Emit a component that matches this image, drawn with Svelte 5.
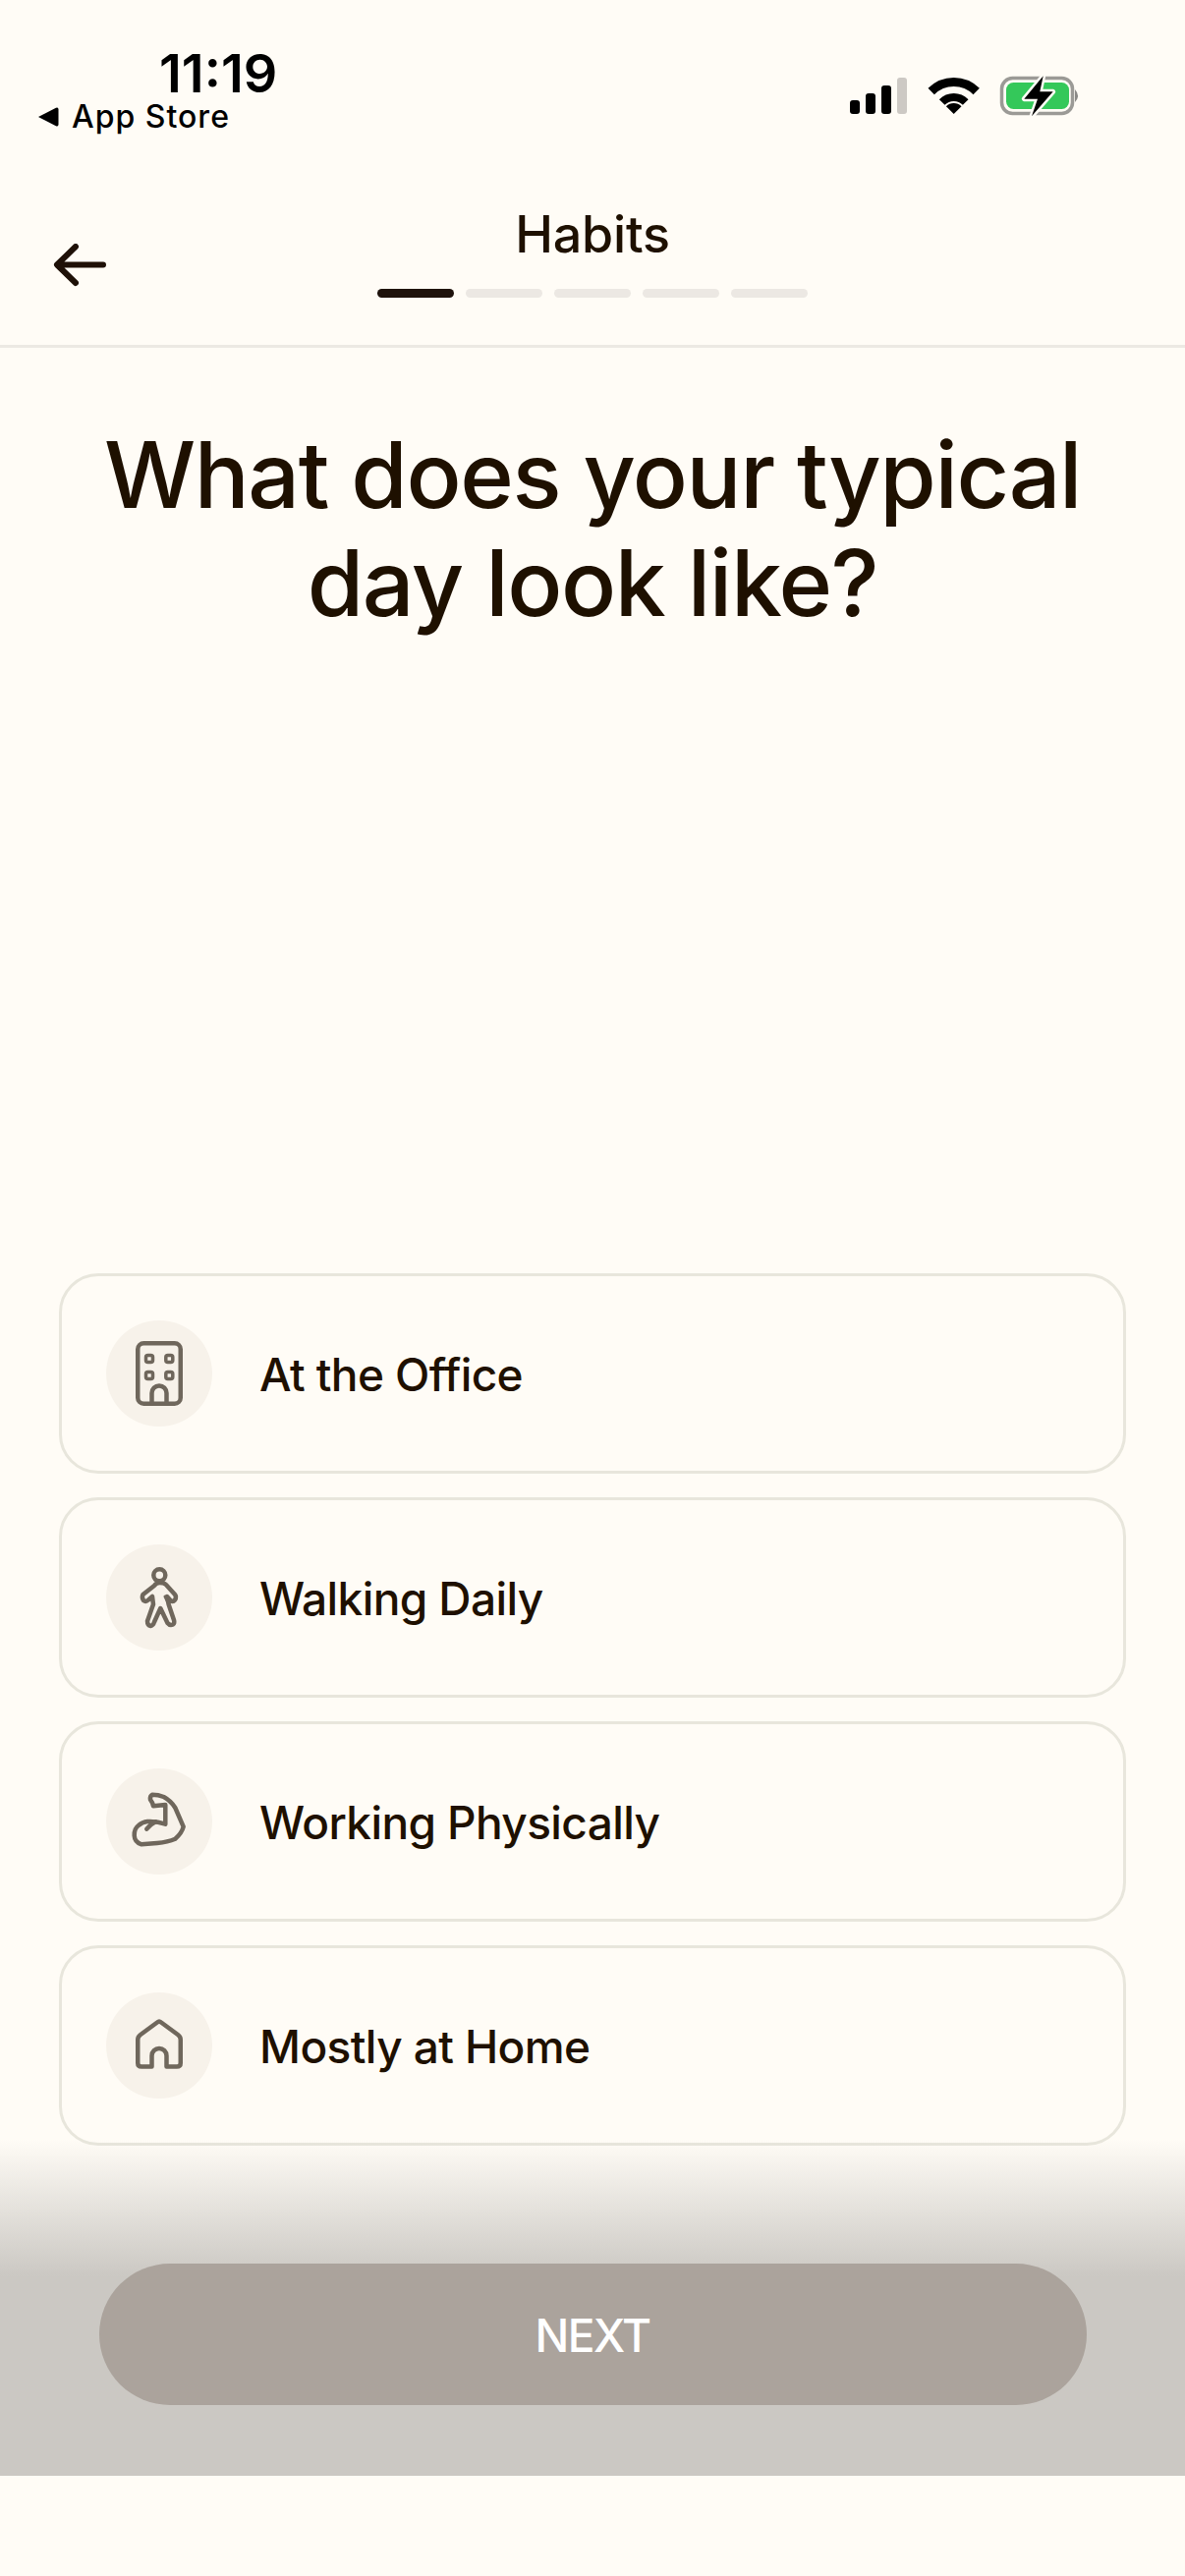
<script>
  const steps = [true, false, false, false, false];
  const options = ['At the Office', 'Walking Daily', 'Working Physically', 'Mostly at Home'];
</script>

<main class="page">
  <div class="status">
    <div class="status-left">
      <span class="time">11:19</span>
      <span class="back-app">
        <svg class="tri" viewBox="0 0 22 20" aria-hidden="true"><path d="M1 10 L19 0.8 Q21.5 0 21.5 2.5 V17.5 Q21.5 20 19 19.2 Z" fill="#000"/></svg>
        App Store
      </span>
    </div>
    <svg class="status-icons" viewBox="0 0 236 40" aria-hidden="true">
      <rect x="0" y="23" width="10" height="14" rx="3" fill="#000"/>
      <rect x="16" y="16" width="10" height="21" rx="3" fill="#000"/>
      <rect x="32" y="8" width="10" height="29" rx="3" fill="#000"/>
      <rect x="48" y="0" width="10" height="37" rx="3" fill="#cdc9c4"/>
      <g fill="none" stroke="#000">
        <path d="M82.7 14 A32.5 32.5 0 0 1 128.7 14" stroke-width="9"/>
        <path d="M93.7 25 A17 17 0 0 1 117.7 25" stroke-width="8"/>
      </g>
      <path d="M105.7 37 L97.9 29.2 A11 11 0 0 1 113.5 29.2 Z" fill="#000"/>
      <rect x="154.5" y="0.5" width="72" height="36" rx="11" fill="none" stroke="#9b9a96" stroke-width="3.5"/>
      <rect x="159" y="5" width="64" height="27" rx="7.5" fill="#34c85a"/>
      <path d="M229 12 Q235 18.5 229 25 Z" fill="#8a8986"/>
      <path d="M196.7 -1.7 L177.3 21.7 H191 L185 39.3 L206.7 14.3 H193.3 Z" fill="#000" stroke="#fffcf6" stroke-width="5" paint-order="stroke" stroke-linejoin="round"/>
    </svg>
  </div>

  <header class="topbar">
    <button class="back" aria-label="Back">
      <svg viewBox="0 0 54 44" aria-hidden="true"><path d="M51 21.5 H5 M23 3 L4 21.5 L23 40" fill="none" stroke="#1e1007" stroke-width="6" stroke-linecap="round" stroke-linejoin="round"/></svg>
    </button>
    <div class="heading">
      <span class="section">Habits</span>
      <div class="progress">
        {#each steps as on}
          <span class="step" class:on></span>
        {/each}
      </div>
    </div>
  </header>

  <h1>What does your typical day look like?</h1>

  <ul class="options">
    {#each options as label, i}
      <li class="option">
        <span class="badge">
          <svg viewBox="0 0 72 72" aria-hidden="true">
            {#if i === 0}
              <rect x="14.25" y="5.25" width="43.5" height="61.5" rx="6"/>
              <rect class="window" x="22.5" y="17.5" width="7" height="7" rx="2"/>
              <rect class="window" x="42.8" y="17.5" width="7" height="7" rx="2"/>
              <rect class="window" x="22.5" y="34.5" width="7" height="7" rx="2"/>
              <rect class="window" x="42.8" y="34.5" width="7" height="7" rx="2"/>
              <path d="M28.5 66 V56 a7.5 7.5 0 0 1 15 0 V66"/>
            {:else if i === 1}
              <circle cx="36.3" cy="13.3" r="6"/>
              <path d="M36.3 21 Q33 21 31 24 L19.5 33 Q18 36 20 39 Q22.5 41 25 38.5 L29 35 L30 43 L24 60 Q24 64.5 27.3 65 Q30 64.5 31 61 L37.3 47 L44.5 62 Q47 65 50 63.5 Q52 62 51 59 L45.7 43.3 L44 35 L47.5 39 Q50 41 52 38.5 Q54 35.5 52 33 L43 23 Q41 21 36.3 21 Z"/>
              <path d="M42 35 L45 41" stroke-width="3"/>
            {:else if i === 2}
              <path d="M29 8.7 Q35 8.7 40.7 11 Q48 15 52.3 22 L60.7 41.3 Q59 48 52.3 53.7 Q45 57 34 58 L18 59.3 Q11 57 10.7 50.3 Q10.5 43 15 40 Q19 36.5 24 36 Q34 35.5 42.3 38.7 L42.3 19 L30 20.3 Q29 16 27 13.7 Q26.5 10 29 8.7 Z"/>
              <path d="M23.3 43.7 Q27 39 32.3 36.3"/>
            {:else}
              <path d="M36 11.5 Q36.8 11.5 38 12.5 L55 25 Q57.75 27 57.75 30 V54 Q57.75 57.5 54 57.5 H43.5 V46.5 a7.5 7.5 0 0 0 -15 0 V57.5 H18 Q14.25 57.5 14.25 54 V30 Q14.25 27 17 25 L34 12.5 Q35.2 11.5 36 11.5 Z"/>
            {/if}
          </svg>
        </span>
        <span class="label">{label}</span>
      </li>
    {/each}
  </ul>

  <div class="footer">
    <button class="next">NEXT</button>
  </div>
</main>

<style>
  :global(body) {
    margin: 0;
    background: #fffcf6;
  }
  .page {
    position: relative;
    display: flex;
    flex-direction: column;
    width: 1206px;
    height: 2622px;
    overflow: hidden;
    background: #fffcf6;
    color: #1e1000;
    font-family: Inter, "Liberation Sans", sans-serif;
  }
  .status {
    display: flex;
    justify-content: space-between;
    height: 180px;
    box-sizing: border-box;
    padding: 79px 105px 0 38px;
    flex: none;
  }
  .status-left {
    display: flex;
    flex-direction: column;
    margin-top: -24px;
  }
  .time {
    margin-left: 124px;
    font-size: 54px;
    line-height: 40px;
    font-weight: 600;
    color: #000;
    letter-spacing: 0;
  }
  .back-app {
    display: flex;
    align-items: center;
    gap: 13px;
    margin-top: 6px;
    font-size: 32px;
    line-height: 36px;
    font-weight: 500;
    letter-spacing: 1px;
    color: #000;
  }
  .tri {
    width: 22px;
    height: 20px;
  }
  .status-icons {
    width: 236px;
    height: 40px;
    margin-left: auto;
    overflow: visible;
  }
  .topbar {
    position: relative;
    flex: none;
    height: 171px;
    border-bottom: 3px solid #ece9e3;
    display: flex;
    justify-content: center;
  }
  .back {
    position: absolute;
    left: 54px;
    top: 68px;
    width: 54px;
    height: 44px;
    padding: 0;
    border: 0;
    background: none;
  }
  .back svg {
    display: block;
    width: 54px;
    height: 44px;
  }
  .heading {
    display: flex;
    flex-direction: column;
    align-items: center;
  }
  .section {
    margin-top: 29px;
    font-size: 52px;
    line-height: 60px;
    font-weight: 460;
    letter-spacing: -0.2px;
  }
  .progress {
    display: flex;
    gap: 12px;
    margin-top: 25px;
  }
  .step {
    width: 78px;
    height: 9px;
    border-radius: 5px;
    background: #ece8e3;
  }
  .step.on {
    background: #1e120c;
  }
  h1 {
    flex: none;
    width: 1040px;
    margin: 74px auto 0;
    font-size: 93px;
    line-height: 110px;
    font-weight: 470;
    letter-spacing: -1.4px;
    text-align: center;
  }
  .options {
    display: flex;
    flex-direction: column;
    gap: 24px;
    list-style: none;
    margin: auto 60px 438px;
    padding: 0;
  }
  .option {
    display: flex;
    align-items: center;
    gap: 48px;
    height: 204px;
    box-sizing: border-box;
    padding: 0 45px;
    border: 3px solid #e8e6dc;
    border-radius: 40px;
  }
  .badge {
    display: flex;
    align-items: center;
    justify-content: center;
    width: 108px;
    height: 108px;
    border-radius: 50%;
    background: #f7f2ea;
    flex: none;
  }
  .badge svg {
    width: 72px;
    height: 72px;
    fill: none;
    stroke: #6f675c;
    stroke-width: 4.5;
    stroke-linejoin: round;
    stroke-linecap: round;
  }
  .badge .window {
    stroke-width: 3.5;
  }
  .label {
    position: relative;
    top: 1px;
    font-size: 46px;
    line-height: 56px;
    font-weight: 450;
    letter-spacing: -0.6px;
  }
  .footer {
    position: absolute;
    left: 0;
    right: 0;
    top: 2177px;
    height: 343px;
    box-sizing: border-box;
    padding-top: 127px;
    display: flex;
    justify-content: center;
    background: linear-gradient(to bottom, rgba(203, 200, 195, 0) 0, #cbc8c3 140px);
  }
  .next {
    width: 1005px;
    height: 144px;
    padding: 2px 0 0;
    border: 0;
    border-radius: 72px;
    background: #aba39c;
    color: #fff;
    font-family: inherit;
    font-size: 46px;
    font-weight: 500;
    letter-spacing: -1.5px;
  }
</style>
